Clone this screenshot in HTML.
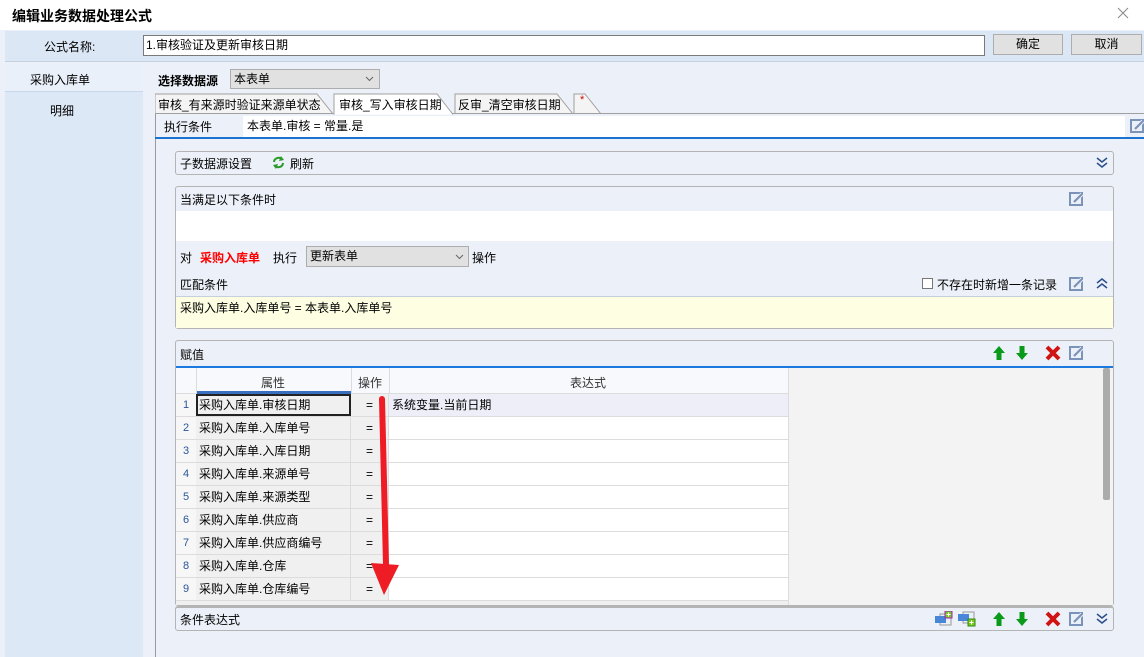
<!DOCTYPE html>
<html><head><meta charset="utf-8"><style>
*{margin:0;padding:0;box-sizing:border-box}
body{width:1144px;height:657px;position:relative;overflow:hidden;background:#ecf0f8;font-family:"Liberation Sans","Noto Sans CJK SC",sans-serif;font-size:12px;color:#000}
.a{position:absolute}
.t{white-space:nowrap}
.btn{background:#e1e1e1;border:1px solid #adadad;text-align:center;line-height:19px}
.panel{position:absolute;border:1px solid #b4b4b4;border-radius:3px;background:#ecf0f8}
.row{position:absolute;left:176px;width:612px;height:23px;border-bottom:1px solid #dcdcdc}
.row .n{position:absolute;left:0;width:20px;height:22px;line-height:22px;text-align:center;color:#2b5797;font-size:11px;background:#f7f7f7}
.row .p{position:absolute;left:20px;width:155px;height:22px;line-height:22px;padding-left:3px;background:#f0f0f0;border-right:1px solid #dcdcdc}
.row .o{position:absolute;left:175px;width:38px;height:22px;line-height:22px;text-align:center;background:#f0f0f0;border-right:1px solid #dcdcdc}
.row .e{position:absolute;left:213px;width:399px;height:22px;line-height:22px;padding-left:3px;background:#fff}
</style></head><body>
<svg width="0" height="0" style="position:absolute"><defs>
<g id="ed"><rect x="1" y="1" width="12" height="12" fill="none" stroke="#7b93b8" stroke-width="2"/><path d="M5 10 L13 2" stroke="#ecf0f8" stroke-width="4"/><path d="M5 10 L13 2" stroke="#7b93b8" stroke-width="2.2"/></g>
<g id="dn"><path d="M1 1 L6 5 L11 1 M1 6 L6 10 L11 6" fill="none" stroke="#2b4f8a" stroke-width="1.5"/></g>
<g id="upc"><path d="M1 5 L6 1 L11 5 M1 10 L6 6 L11 10" fill="none" stroke="#2b4f8a" stroke-width="1.5"/></g>
<g id="ua"><path d="M6 0 L12 7 L8.5 7 L8.5 14 L3.5 14 L3.5 7 L0 7 Z" fill="#0a9a1a"/></g>
<g id="da"><path d="M6 14 L12 7 L8.5 7 L8.5 0 L3.5 0 L3.5 7 L0 7 Z" fill="#0a9a1a"/></g>
<g id="x"><path d="M2 2 L14 14 M14 2 L2 14" stroke="#d01414" stroke-width="4"/></g>
</defs></svg>
<div class="a" style="left:0;top:0;width:1144px;height:30px;background:#fff"></div>
<div class="a t" style="left:12px;top:6px;font-size:14px;font-weight:bold">编辑业务数据处理公式</div>
<svg class="a" style="left:1117px;top:7px" width="12" height="12"><path d="M1 1 L11 11 M11 1 L1 11" stroke="#888" stroke-width="1"/></svg>
<div class="a" style="left:5px;top:31px;width:1139px;height:31px;background:#dce7f5;border-bottom:1px solid #c5d0de"></div>
<div class="a t" style="left:44px;top:38px">公式名称:</div>
<div class="a t" style="left:143px;top:35px;width:842px;height:21px;background:#fff;border:1px solid #7a7a7a;padding-left:2px;line-height:19px">1.审核验证及更新审核日期</div>
<div class="a btn" style="left:993px;top:34px;width:70px;height:21px">确定</div>
<div class="a btn" style="left:1071px;top:34px;width:71px;height:21px">取消</div>
<div class="a" style="left:5px;top:64px;width:138px;height:593px;background:#dde8f6"></div>
<div class="a" style="left:5px;top:64px;width:138px;height:28px;background:#e9f0fa;border-bottom:1px solid #c9d7ea"></div>
<div class="a t" style="left:30px;top:71px">采购入库单</div>
<div class="a t" style="left:50px;top:102px">明细</div>
<div class="a t" style="left:158px;top:72px;font-weight:bold">选择数据源</div>
<div class="a t" style="left:230px;top:69px;width:150px;height:20px;background:#e1e1e1;border:1px solid #adadad;padding-left:3px;line-height:18px">本表单</div>
<svg class="a" style="left:365px;top:76px" width="9" height="6"><path d="M1 1 L4.5 4.5 L8 1" fill="none" stroke="#666"/></svg>
<!-- tabs -->
<svg class="a" style="left:155px;top:93px" width="989" height="22">
<path d="M0 21 L0 1 L162 1 L178 21" fill="#f4f4f4" stroke="#a0a0a0"/>
<path d="M300 21 L300 1 L402 1 L418 21" fill="#f4f4f4" stroke="#a0a0a0"/>
<path d="M419 21 L419 1 L430 1 L446 21" fill="#f4f4f4" stroke="#a0a0a0"/>
<path d="M0 20.5 L989 20.5" stroke="#a0a0a0"/>
<path d="M179 21.5 L179 1 L282 1 L298 21.5" fill="#fff" stroke="#a0a0a0"/>
</svg>
<div class="a t" style="left:158px;top:96px">审核_有来源时验证来源单状态</div>
<div class="a t" style="left:339px;top:96px">审核_写入审核日期</div>
<div class="a t" style="left:458px;top:96px">反审_清空审核日期</div>
<div class="a t" style="left:580px;top:94px;color:#c00;font-size:11px">*</div>
<div class="a" style="left:155px;top:114px;width:1px;height:543px;background:#9a9a9a"></div>
<div class="a t" style="left:164px;top:118px;font-size:12px">执行条件</div>
<div class="a t" style="left:243px;top:116px;width:882px;height:21px;background:#fff;padding-left:4px;line-height:20px">本表单.审核 = 常量.是</div>
<svg class="a" style="left:1130px;top:119px" width="14" height="14"><use href="#ed"/></svg>
<div class="a" style="left:155px;top:137px;width:989px;height:2px;background:#1a73d1"></div>
<!-- panel1 -->
<div class="panel" style="left:175px;top:151px;width:939px;height:24px"></div>
<div class="a t" style="left:180px;top:155px">子数据源设置</div>
<svg class="a" style="left:272px;top:156px" width="13" height="13"><path d="M2 6 A4.5 4.5 0 0 1 10 3.5" fill="none" stroke="#2a9a2a" stroke-width="2"/><path d="M9 0 L12 4 L7 5 Z" fill="#2a9a2a"/><path d="M11 7 A4.5 4.5 0 0 1 3 9.5" fill="none" stroke="#2a9a2a" stroke-width="2"/><path d="M4 13 L1 9 L6 8 Z" fill="#2a9a2a"/></svg>
<div class="a t" style="left:290px;top:155px">刷新</div>
<svg class="a" style="left:1096px;top:157px" width="12" height="11"><use href="#dn"/></svg>
<!-- panel2 -->
<div class="panel" style="left:175px;top:186px;width:939px;height:143px"></div>
<div class="a t" style="left:180px;top:191px">当满足以下条件时</div>
<svg class="a" style="left:1069px;top:192px" width="14" height="14"><use href="#ed"/></svg>
<div class="a" style="left:176px;top:211px;width:937px;height:30px;background:#fff"></div>
<div class="a t" style="left:180px;top:249px">对</div>
<div class="a t" style="left:200px;top:249px;color:#f00;font-weight:bold">采购入库单</div>
<div class="a t" style="left:273px;top:249px">执行</div>
<div class="a t" style="left:306px;top:246px;width:163px;height:21px;background:#e1e1e1;border:1px solid #adadad;padding-left:3px;line-height:19px">更新表单</div>
<svg class="a" style="left:455px;top:254px" width="9" height="6"><path d="M1 1 L4.5 4.5 L8 1" fill="none" stroke="#666"/></svg>
<div class="a t" style="left:472px;top:249px">操作</div>
<div class="a t" style="left:180px;top:276px">匹配条件</div>
<div class="a" style="left:922px;top:278px;width:11px;height:11px;border:1px solid #777;background:#fff"></div>
<div class="a t" style="left:937px;top:276px">不存在时新增一条记录</div>
<svg class="a" style="left:1069px;top:277px" width="14" height="14"><use href="#ed"/></svg>
<svg class="a" style="left:1096px;top:278px" width="12" height="11"><use href="#upc"/></svg>
<div class="a" style="left:176px;top:296px;width:937px;height:32px;background:#fefee2;border-top:1px solid #c5d0de"></div>
<div class="a t" style="left:180px;top:299px">采购入库单.入库单号 = 本表单.入库单号</div>
<!-- panel3 -->
<div class="panel" style="left:175px;top:340px;width:939px;height:266px"></div>
<div class="a t" style="left:180px;top:346px">赋值</div>
<svg class="a" style="left:993px;top:346px" width="12" height="14"><use href="#ua"/></svg>
<svg class="a" style="left:1016px;top:346px" width="12" height="14"><use href="#da"/></svg>
<svg class="a" style="left:1045px;top:345px" width="16" height="16"><use href="#x"/></svg>
<svg class="a" style="left:1069px;top:346px" width="14" height="14"><use href="#ed"/></svg>
<div class="a" style="left:176px;top:366px;width:937px;height:2px;background:#1a7ae0"></div>
<div class="a" style="left:176px;top:368px;width:937px;height:237px;background:#f3f3f3"></div>
<div class="a" style="left:176px;top:368px;width:612px;height:26px;background:#f7f9fc;border-bottom:1px solid #dcdcdc"></div>
<div class="a" style="left:196px;top:368px;width:1px;height:26px;background:#dcdcdc"></div>
<div class="a" style="left:351px;top:368px;width:1px;height:26px;background:#dcdcdc"></div>
<div class="a" style="left:389px;top:368px;width:1px;height:26px;background:#dcdcdc"></div>
<div class="a" style="left:788px;top:368px;width:1px;height:237px;background:#dcdcdc"></div>
<div class="a t" style="left:261px;top:374px;color:#333">属性</div>
<div class="a" style="left:197px;top:391px;width:154px;height:3px;background:#3a6fc0"></div>
<div class="a t" style="left:358px;top:374px;color:#333">操作</div>
<div class="a t" style="left:570px;top:374px;color:#333">表达式</div>
<div class="a" style="left:1103px;top:368px;width:7px;height:132px;background:#ababab;border-radius:2px"></div>

<div class="row" style="top:394px"><div class="n">1</div><div class="p" style="border:2px solid #222;line-height:18px;padding-left:1px">采购入库单.审核日期</div><div class="o">=</div><div class="e" style="background:#eeeef9">系统变量.当前日期</div></div>
<div class="row" style="top:417px"><div class="n">2</div><div class="p">采购入库单.入库单号</div><div class="o">=</div><div class="e"></div></div>
<div class="row" style="top:440px"><div class="n">3</div><div class="p">采购入库单.入库日期</div><div class="o">=</div><div class="e"></div></div>
<div class="row" style="top:463px"><div class="n">4</div><div class="p">采购入库单.来源单号</div><div class="o">=</div><div class="e"></div></div>
<div class="row" style="top:486px"><div class="n">5</div><div class="p">采购入库单.来源类型</div><div class="o">=</div><div class="e"></div></div>
<div class="row" style="top:509px"><div class="n">6</div><div class="p">采购入库单.供应商</div><div class="o">=</div><div class="e"></div></div>
<div class="row" style="top:532px"><div class="n">7</div><div class="p">采购入库单.供应商编号</div><div class="o">=</div><div class="e"></div></div>
<div class="row" style="top:555px"><div class="n">8</div><div class="p">采购入库单.仓库</div><div class="o">=</div><div class="e"></div></div>
<div class="row" style="top:578px"><div class="n">9</div><div class="p">采购入库单.仓库编号</div><div class="o">=</div><div class="e"></div></div>
<div class="a" style="left:176px;top:601px;width:612px;height:4px;background:#f0f0f0"></div>
<svg class="a" style="left:368px;top:395px" width="34" height="205"><path d="M14 4 L18 170" stroke="#ee1c25" stroke-width="6" stroke-linecap="round"/><path d="M3 168 L31 170 L16 200 Z" fill="#ee1c25"/></svg>
<!-- panel4 -->
<div class="panel" style="left:175px;top:606px;width:939px;height:25px;border-top:2px solid #b4b4b4"></div>
<div class="a t" style="left:180px;top:611px">条件表达式</div>
<svg class="a" style="left:935px;top:611px" width="18" height="16"><rect x="5" y="3" width="11" height="11" fill="none" stroke="#999"/><rect x="0" y="5" width="11" height="7" fill="#4a86d8"/><rect x="10" y="0" width="7" height="7" fill="#7cc820" stroke="#a020c0"/><path d="M13.5 1.5 V5.5 M11.5 3.5 H15.5" stroke="#fff"/></svg>
<svg class="a" style="left:958px;top:611px" width="18" height="16"><rect x="5" y="1" width="11" height="11" fill="none" stroke="#999"/><rect x="0" y="3" width="11" height="7" fill="#4a86d8"/><rect x="10" y="8" width="7" height="7" fill="#7cc820" stroke="#2a8a10"/><path d="M13.5 9.5 V13.5 M11.5 11.5 H15.5" stroke="#fff"/></svg>
<svg class="a" style="left:993px;top:612px" width="12" height="14"><use href="#ua"/></svg>
<svg class="a" style="left:1016px;top:612px" width="12" height="14"><use href="#da"/></svg>
<svg class="a" style="left:1045px;top:611px" width="16" height="16"><use href="#x"/></svg>
<svg class="a" style="left:1069px;top:612px" width="14" height="14"><use href="#ed"/></svg>
<svg class="a" style="left:1096px;top:613px" width="12" height="11"><use href="#dn"/></svg>
</body></html>
